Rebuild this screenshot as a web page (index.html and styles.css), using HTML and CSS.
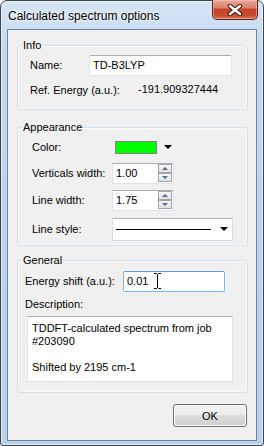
FILE: index.html
```html
<!DOCTYPE html>
<html lang="en">
<head>
    <meta charset="UTF-8">
    <title>Calculated spectrum options</title>
    <link rel="stylesheet" href="styles.css">
</head>
<body>

<div class="window">
    <div class="titlebar">
        <span class="title">Calculated spectrum options</span>
        <div class="close-btn">
            <svg width="16" height="12" viewBox="0 0 16 12">
                <path d="M3 2 L13 10 M13 2 L3 10" stroke="#3b1a14" stroke-width="4.4" stroke-linecap="round"/>
                <path d="M3 2 L13 10 M13 2 L3 10" stroke="#ffffff" stroke-width="2.4" stroke-linecap="round"/>
            </svg>
        </div>
    </div>

    <div class="client">
        <fieldset class="group info">
            <legend>Info</legend>
            <div class="row name-row">
                <label class="lbl">Name:</label>
                <input class="field name-field" type="text" value="TD-B3LYP">
            </div>
            <div class="row ref-row">
                <span class="lbl">Ref. Energy (a.u.):</span>
                <span class="ref-value">-191.909327444</span>
            </div>
        </fieldset>

        <fieldset class="group appearance">
            <legend>Appearance</legend>
            <div class="row color-row">
                <span class="lbl">Color:</span>
                <span class="swatch"></span>
                <span class="arrow"></span>
            </div>
            <div class="row spin-row">
                <span class="lbl">Verticals width:</span>
                <div class="spinbox">
                    <span class="spin-text">1.00</span>
                    <div class="spin-btns">
                        <span class="spin-btn"><span class="tri-up"></span></span>
                        <span class="spin-btn"><span class="tri-down"></span></span>
                    </div>
                </div>
            </div>
            <div class="row spin-row2">
                <span class="lbl">Line width:</span>
                <div class="spinbox">
                    <span class="spin-text">1.75</span>
                    <div class="spin-btns">
                        <span class="spin-btn"><span class="tri-up"></span></span>
                        <span class="spin-btn"><span class="tri-down"></span></span>
                    </div>
                </div>
            </div>
            <div class="row style-row">
                <span class="lbl">Line style:</span>
                <div class="combo">
                    <span class="combo-line"></span>
                    <span class="arrow"></span>
                </div>
            </div>
        </fieldset>

        <fieldset class="group general">
            <legend>General</legend>
            <div class="row shift-row">
                <span class="lbl">Energy shift (a.u.):</span>
                <div class="field shift-field">
                    0.01
                    <svg class="ibeam" width="9" height="16" viewBox="0 0 9 16">
                        <path d="M1 0.5 H3.5 L4.5 1.5 L5.5 0.5 H8 M4.5 1.5 V14.5 M1 15.5 H3.5 L4.5 14.5 L5.5 15.5 H8" stroke="#000" stroke-width="1" fill="none"/>
                    </svg>
                </div>
            </div>
            <div class="row desc-row">
                <span class="lbl">Description:</span>
            </div>
            <div class="textarea">TDDFT-calculated spectrum from job #203090<br><br>Shifted by 2195 cm-1</div>
        </fieldset>

        <div class="buttons">
            <button class="btn">OK</button>
        </div>
    </div>
</div>

</body>
</html>
```

FILE: styles.css
```css
html, body {
    margin: 0;
    padding: 0;
}
body {
    width: 264px;
    height: 446px;
    font-family: "Liberation Sans", Arial, sans-serif;
    font-size: 12px;
    color: #000;
    background-color: #fff;
}
.window {
    box-sizing: border-box;
    width: 264px;
    height: 446px;
    display: flex;
    flex-direction: column;
    padding: 0 6px 4px 6px;
    border: 1px solid #3c4450;
    border-radius: 7px 7px 3px 3px;
    background: linear-gradient(180deg, #d6e5f5 0%, #c4d9ef 10%, #bcd3ec 60%, #b9d1eb 100%);
    box-shadow: inset 0 0 0 1px rgba(255, 255, 255, 0.55);
}
.titlebar {
    height: 28px;
    display: flex;
    justify-content: space-between;
    align-items: flex-start;
}
.title {
    margin-top: 8px;
    margin-left: 1px;
    font-size: 12px;
    text-shadow: 0 0 6px #fff, 0 0 3px #fff;
}
.close-btn {
    box-sizing: border-box;
    width: 46px;
    height: 20px;
    margin-top: -1px;
    margin-right: -1px;
    display: flex;
    align-items: center;
    justify-content: center;
    border: 1px solid #5b2216;
    border-top: none;
    border-radius: 0 0 5px 5px;
    background: linear-gradient(180deg, #e9a99a 0%, #d9826f 40%, #c2442a 50%, #c64a2f 80%, #dd7a5f 100%);
    box-shadow: inset 0 0 0 1px rgba(255, 200, 190, 0.5);
}
.client {
    flex: 1;
    display: flex;
    flex-direction: column;
    padding: 8px 8px 0 9px;
    font-size: 11px;
    border: 1px solid #6f8298;
    background-color: #f0f0f0;
}
.group {
    margin: 0;
    padding: 0 0 0 0;
    border: 1px solid #d5dfe5;
    border-radius: 3px;
    box-shadow: inset 0 0 0 1px #fbfbfb;
    min-width: 0;
}
.group legend {
    margin-left: 4px;
    padding: 0 1px;
    line-height: 15px;
}
.appearance {
    margin-top: 10px;
}
.general {
    margin-top: 7px;
    padding-bottom: 10px;
}
.row {
    display: flex;
    align-items: center;
}
.lbl {
    white-space: nowrap;
}

/* Info */
.info {
    padding-bottom: 6px;
}
.info .lbl {
    margin-left: 12px;
}
.name-row {
    height: 24px;
}
.name-row .lbl {
    width: 59px;
}
.field {
    box-sizing: border-box;
    height: 21px;
    margin: 0;
    padding: 0 3px;
    font: inherit;
    color: #000;
    background-color: #fff;
    border: 1px solid #e2e3ea;
    border-top-color: #abadb3;
    border-radius: 2px;
    outline: none;
}
.name-field {
    width: 143px;
}
.ref-row {
    height: 26px;
}
.ref-row .lbl {
    width: 108px;
}
.ref-value {
    margin-top: -2px;
}

/* Appearance */
.appearance .lbl {
    margin-left: 14px;
}
.color-row {
    height: 24px;
}
.color-row .lbl {
    width: 83px;
}
.swatch {
    box-sizing: border-box;
    width: 42px;
    height: 13px;
    background-color: #00ff00;
    border: 1px solid #808080;
}
.arrow {
    width: 0;
    height: 0;
    margin-left: 7px;
    border-left: 4px solid transparent;
    border-right: 4px solid transparent;
    border-top: 4px solid #000;
}
.spin-row {
    height: 28px;
}
.spin-row2 {
    height: 26px;
}
.style-row {
    height: 32px;
}
.spin-row .lbl,
.spin-row2 .lbl,
.style-row .lbl {
    width: 80px;
}
.spinbox {
    box-sizing: border-box;
    width: 62px;
    height: 21px;
    display: flex;
    align-items: center;
    justify-content: space-between;
    padding: 0 1px 0 3px;
    background-color: #fff;
    border: 1px solid #e2e3ea;
    border-top-color: #abadb3;
}
.spin-btns {
    display: flex;
    flex-direction: column;
}
.spin-btn {
    box-sizing: border-box;
    width: 14px;
    height: 9px;
    display: flex;
    align-items: center;
    justify-content: center;
    border: 1px solid #a4a4a4;
    background: linear-gradient(180deg, #f6f6f6, #e2e2e2);
}
.tri-up {
    width: 0;
    height: 0;
    border-left: 3px solid transparent;
    border-right: 3px solid transparent;
    border-bottom: 3px solid #4d6a9c;
}
.tri-down {
    width: 0;
    height: 0;
    border-left: 3px solid transparent;
    border-right: 3px solid transparent;
    border-top: 3px solid #4d6a9c;
}
.combo {
    box-sizing: border-box;
    width: 121px;
    height: 23px;
    display: flex;
    align-items: center;
    padding: 0 4px 0 3px;
    background-color: #fff;
    border: 1px solid #dcdcdc;
    border-top-color: #b4b4b4;
}
.combo-line {
    width: 98px;
    height: 1px;
    background-color: #000;
}
.combo .arrow {
    margin-left: 9px;
}

/* General */
.general .lbl {
    margin-left: 7px;
}
.shift-row {
    height: 26px;
}
.shift-row .lbl {
    width: 98px;
}
.shift-field {
    position: relative;
    width: 102px;
    display: flex;
    align-items: center;
    border-color: #7eb4ea;
    border-top-color: #569de5;
}
.ibeam {
    position: absolute;
    left: 29px;
    top: 1px;
}
.desc-row {
    height: 20px;
}
.textarea {
    box-sizing: border-box;
    width: 206px;
    height: 66px;
    margin: 2px 0 0 9px;
    padding: 5px 4px 3px;
    line-height: 13px;
    background-color: #fff;
    border: 1px solid #e2e3ea;
    border-top-color: #abadb3;
}

/* Buttons */
.buttons {
    display: flex;
    justify-content: flex-end;
    margin-top: 11px;
    padding-right: 1px;
}
.btn {
    box-sizing: border-box;
    width: 74px;
    height: 23px;
    font: inherit;
    color: #000;
    border: 1px solid #707070;
    border-radius: 3px;
    background: linear-gradient(180deg, #f2f2f2 0%, #ebebeb 48%, #dddddd 50%, #cfcfcf 100%);
    box-shadow: inset 0 0 0 1px #fcfcfc;
}
```
